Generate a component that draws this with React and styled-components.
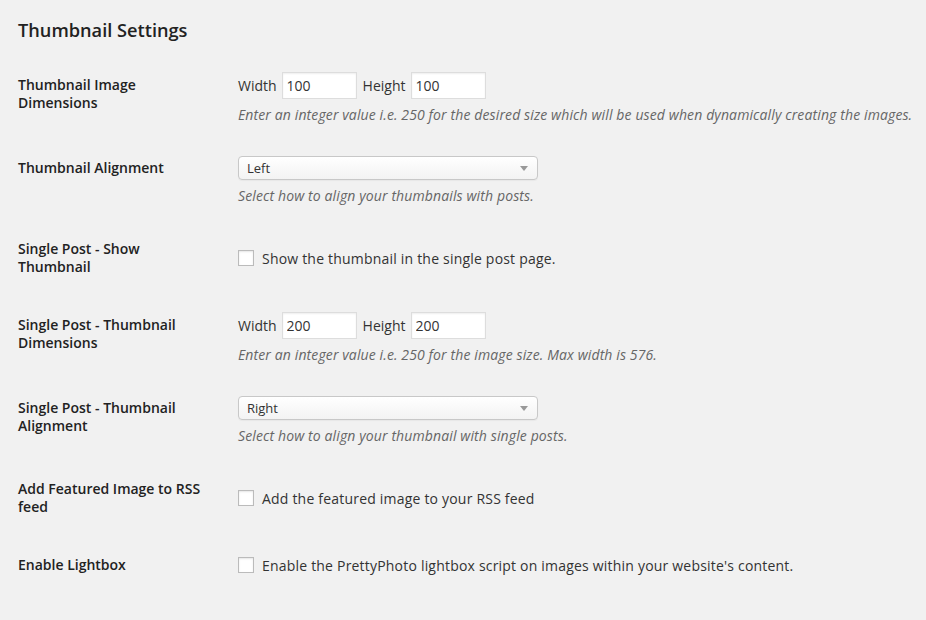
import styled, { createGlobalStyle } from 'styled-components';

const GlobalStyle = createGlobalStyle`
  body {
    margin: 0;
    background: #f1f1f1;
    font-family: "Open Sans", "Liberation Sans", sans-serif;
    color: #444;
  }
`;

const Page = styled.div`
  padding: 0 18px;
  min-height: 620px;
  box-sizing: border-box;
  overflow: hidden;
`;

const Title = styled.h3`
  margin: 0;
  padding: 18px 0 14px;
  font-size: 18.2px;
  line-height: 24px;
  font-weight: 600;
  color: #222;
`;

const Row = styled.div`
  display: grid;
  grid-template-columns: 210px 1fr;
`;

const Label = styled.div`
  align-self: start;
  width: 190px;
  padding: 20px 20px 20px 0;
  font-size: 14px;
  line-height: 18px;
  font-weight: 600;
  color: #222;
`;

const Field = styled.div`
  align-self: center;
  padding: 15px 10px;
  font-size: 14px;
`;

const Inline = styled.div`
  display: flex;
  align-items: center;
  height: ${(p) => p.$h || 29}px;
`;

const SizeLabel = styled.span`
  color: #333;
  margin-right: 5px;
`;

const NumberInput = styled.input`
  width: 75px;
  height: 27px;
  box-sizing: border-box;
  margin: 0 6px 0 0;
  padding: 2px 4px;
  border: 1px solid #ddd;
  box-shadow: inset 0 1px 2px rgba(0, 0, 0, 0.07);
  background: #fff;
  font-family: inherit;
  font-size: 14px;
  color: #333;
  outline: none;
`;

const Description = styled.p`
  margin: 5px 0 0;
  font-size: 14px;
  line-height: 19px;
  letter-spacing: 0.12px;
  font-style: italic;
  color: #666;
  white-space: nowrap;
`;

const SelectWrap = styled.div`
  position: relative;
  width: 300px;
`;

const Select = styled.select`
  appearance: none;
  width: 300px;
  height: 24px;
  box-sizing: border-box;
  margin: 0;
  padding: 0 8px;
  border: 1px solid #c8c8c8;
  border-radius: 4px;
  background: linear-gradient(#ffffff, #f3f3f3);
  box-shadow: 0 1px 1px rgba(0, 0, 0, 0.04);
  font-family: inherit;
  font-size: 13px;
  color: #333;
  outline: none;
`;

const Arrow = styled.span`
  position: absolute;
  right: 10px;
  top: 10px;
  width: 0;
  height: 0;
  border-left: 4px solid transparent;
  border-right: 4px solid transparent;
  border-top: 5px solid #999;
  pointer-events: none;
`;

const CheckLabel = styled.label`
  display: flex;
  align-items: center;
  gap: 8px;
  color: #333;
  line-height: 19px;
  letter-spacing: 0.2px;
  white-space: nowrap;
`;

const Checkbox = styled.input`
  appearance: none;
  width: 16px;
  height: 16px;
  margin: 0;
  border: 1px solid #bbb;
  background: #fff;
  box-shadow: inset 0 1px 2px rgba(0, 0, 0, 0.1);
`;

function SizeField({ width, height, hint }) {
  return (
    <Field>
      <Inline>
        <SizeLabel>Width</SizeLabel>
        <NumberInput defaultValue={width} />
        <SizeLabel>Height</SizeLabel>
        <NumberInput defaultValue={height} />
      </Inline>
      <Description>{hint}</Description>
    </Field>
  );
}

function SelectField({ value, hint }) {
  return (
    <Field>
      <Inline $h={27}>
        <SelectWrap>
          <Select defaultValue={value}>
            <option>Left</option>
            <option>Right</option>
            <option>Center</option>
            <option>None</option>
          </Select>
          <Arrow />
        </SelectWrap>
      </Inline>
      <Description>{hint}</Description>
    </Field>
  );
}

function CheckField({ text }) {
  return (
    <Field>
      <CheckLabel>
        <Checkbox type="checkbox" />
        {text}
      </CheckLabel>
    </Field>
  );
}

export default function App() {
  return (
    <Page>
      <GlobalStyle />
      <Title>Thumbnail Settings</Title>

      <Row>
        <Label>Thumbnail Image Dimensions</Label>
        <SizeField
          width="100"
          height="100"
          hint="Enter an integer value i.e. 250 for the desired size which will be used when dynamically creating the images."
        />
      </Row>

      <Row>
        <Label>Thumbnail Alignment</Label>
        <SelectField value="Left" hint="Select how to align your thumbnails with posts." />
      </Row>

      <Row>
        <Label>Single Post - Show Thumbnail</Label>
        <CheckField text="Show the thumbnail in the single post page." />
      </Row>

      <Row>
        <Label>Single Post - Thumbnail Dimensions</Label>
        <SizeField
          width="200"
          height="200"
          hint="Enter an integer value i.e. 250 for the image size. Max width is 576."
        />
      </Row>

      <Row>
        <Label>Single Post - Thumbnail Alignment</Label>
        <SelectField value="Right" hint="Select how to align your thumbnail with single posts." />
      </Row>

      <Row>
        <Label>Add Featured Image to RSS feed</Label>
        <CheckField text="Add the featured image to your RSS feed" />
      </Row>

      <Row>
        <Label>Enable Lightbox</Label>
        <CheckField text="Enable the PrettyPhoto lightbox script on images within your website's content." />
      </Row>
    </Page>
  );
}
